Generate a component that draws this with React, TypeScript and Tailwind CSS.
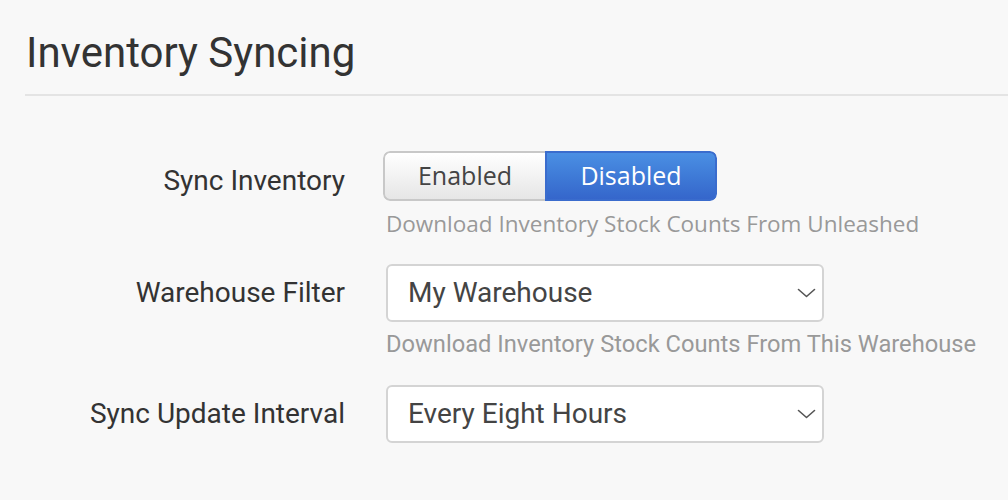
import React from "react";

function Chevron() {
  return (
    <svg width="19" height="10" viewBox="0 0 19 10" fill="none" className="shrink-0">
      <path d="M1.5 1.5 L9.5 8.5 L17.5 1.5" stroke="#555" strokeWidth="1.6" strokeLinecap="round" strokeLinejoin="round" />
    </svg>
  );
}

function Select({ value }: { value: string }) {
  return (
    <div className="flex h-[58px] w-[438px] items-center justify-between rounded-[6px] border-2 border-[#d4d4d4] bg-white pl-[20px] pr-[6px]">
      <span className="text-[28px] text-[#444]">{value}</span>
      <Chevron />
    </div>
  );
}

export default function App() {
  return (
    <div
      className="min-h-[500px] w-[1008px] bg-[#f8f8f8] text-[#333]"
      style={{ fontFamily: "Roboto, 'Liberation Sans', sans-serif" }}
    >
      <div className="pl-[25px] pt-[27px]">
        <h1 className="pl-[1px] text-[42px] leading-[52px] text-[#333]">Inventory Syncing</h1>
        <div className="mt-[15px] h-[2px] bg-[#e4e4e4]" />
      </div>

      <div className="mt-[55px] grid grid-cols-[345px_1fr] items-start gap-x-[38px]">
        <div className="flex h-[50px] items-center justify-end pt-[9px] text-[28px] text-[#333]">Sync Inventory</div>
        <div>
          <div className="flex h-[50px] w-[334px] overflow-hidden rounded-[7px]">
            <div
              className="flex w-[162px] items-center justify-center rounded-l-[7px] border-2 border-r-0 border-[#c8c8c8] bg-gradient-to-b from-[#ffffff] to-[#e6e6e6] text-[25px] text-[#444]"
              style={{ fontFamily: "'Open Sans', Roboto, sans-serif" }}
            >
              Enabled
            </div>
            <div
              className="flex flex-1 items-center justify-center rounded-r-[7px] border-2 border-[#3a6ccd] bg-gradient-to-b from-[#4a8fe3] to-[#3566cb] text-[25px] text-white"
              style={{ fontFamily: "'Open Sans', Roboto, sans-serif" }}
            >
              Disabled
            </div>
          </div>
          <div
            className="ml-[3px] mt-[8px] text-[22.5px] leading-[30px] text-[#999]"
            style={{ fontFamily: "'Open Sans', Roboto, sans-serif" }}
          >
            Download Inventory Stock Counts From Unleashed
          </div>
        </div>

        <div className="mt-[25px] flex h-[58px] items-center justify-end text-[28px] text-[#333]">Warehouse Filter</div>
        <div className="mt-[25px] pl-[3px]">
          <Select value="My Warehouse" />
          <div className="mt-[7px] text-[23.7px] leading-[30px] text-[#999]">Download Inventory Stock Counts From This Warehouse</div>
        </div>

        <div className="mt-[26px] flex h-[58px] items-center justify-end text-[28px] text-[#333]">Sync Update Interval</div>
        <div className="mt-[26px] pl-[3px]">
          <Select value="Every Eight Hours" />
        </div>
      </div>
    </div>
  );
}
